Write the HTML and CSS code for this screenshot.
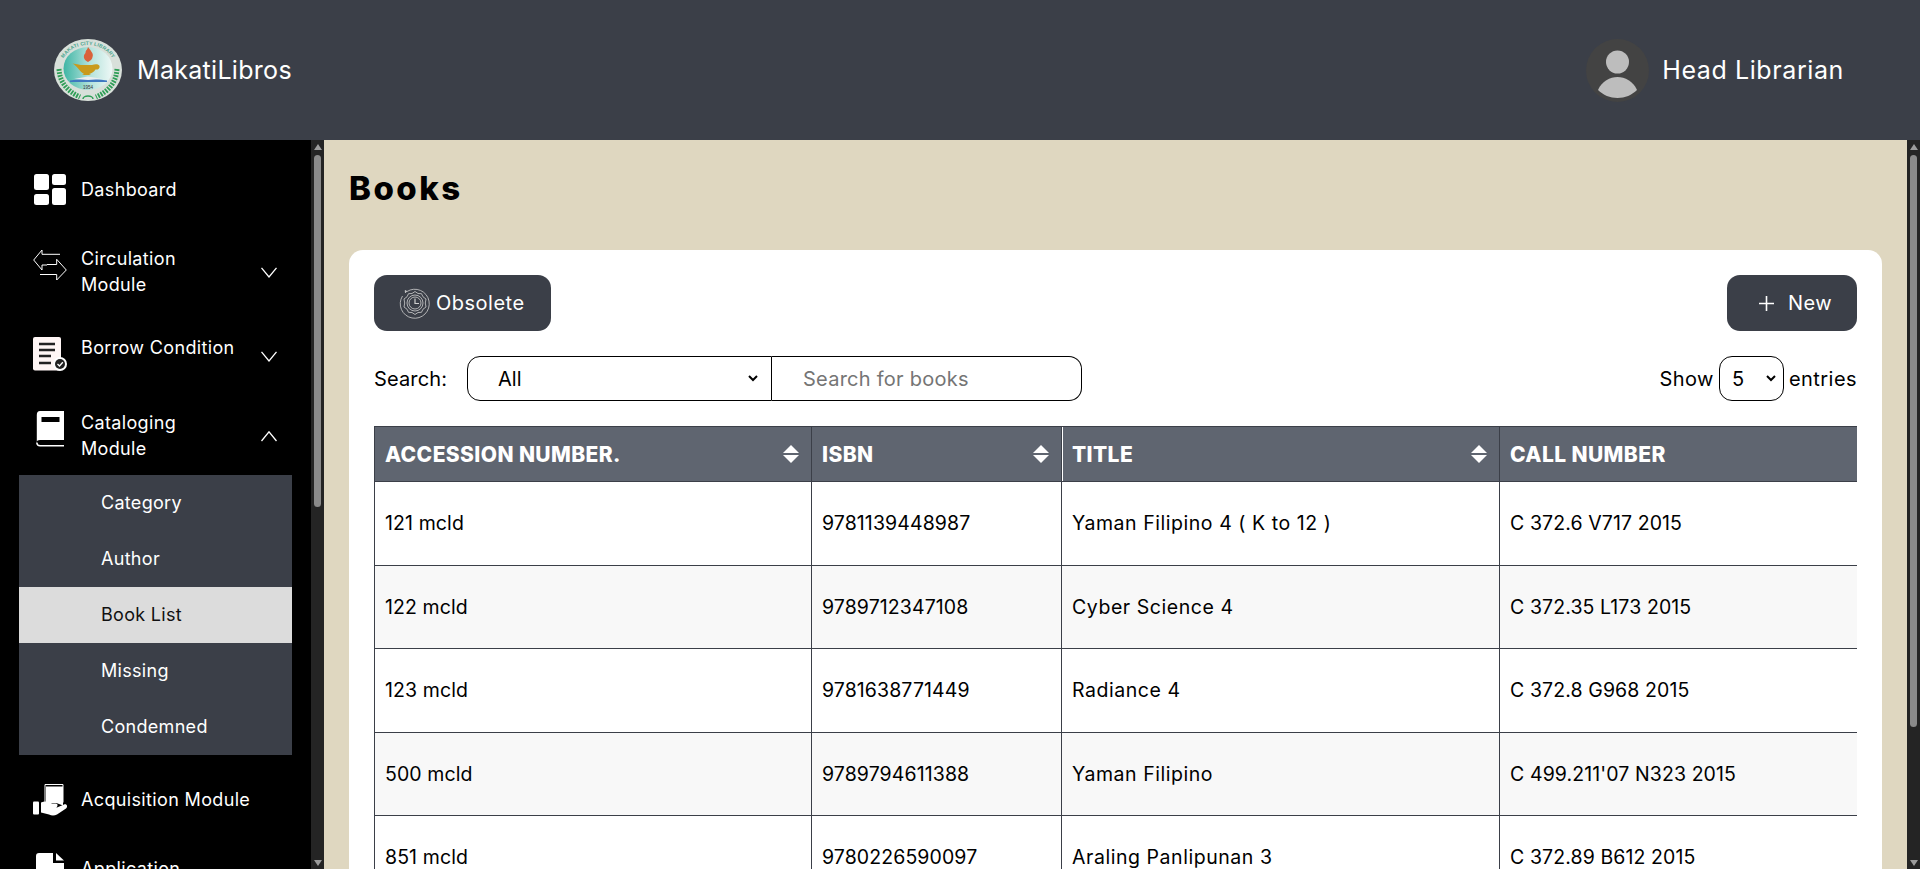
FILE: index.html
```html
<!DOCTYPE html>
<html lang="en">
<head>
<meta charset="utf-8">
<title>MakatiLibros - Books</title>
<link rel="stylesheet" href="styles.css">
</head>
<body>
<header class="topbar">
  <div class="brand">
    <svg class="logo" viewBox="0 0 68 62" aria-label="Makati City Library seal">
      <defs>
        <linearGradient id="seal" x1="0" x2="1" y1="0" y2="0">
          <stop offset="0" stop-color="#3fb5a5"/>
          <stop offset="0.55" stop-color="#b5e3dc"/>
          <stop offset="1" stop-color="#eef8f6"/>
        </linearGradient>
        <path id="sealArc" d="M5.500 33 A28.500 27 0 0 1 62.500 33"/>
      </defs>
      <ellipse cx="34" cy="31" rx="34" ry="31" fill="#d8e0da"/>
      <ellipse cx="34" cy="29.500" rx="24.500" ry="21.500" fill="url(#seal)"/>
      <text class="seal-text"><textPath href="#sealArc" startOffset="50%" text-anchor="middle">MAKATI CITY LIBRARY</textPath></text>
      <path d="M5 30 Q6 49 26 58 M63 30 Q62 49 42 58" fill="none" stroke="#2f9e57" stroke-width="5" stroke-dasharray="1.800 1.200"/>
      <path d="M29 60 a5 3 0 0 1 10 0" fill="none" stroke="#2f9e57" stroke-width="1.500"/>
      <path d="M34 23 C29 21 29 16 31.500 14 C31.500 11 33.500 11 34 8 C37 12 40 15 38.500 18 C38.500 20 36 22 34 23Z" fill="#d9623a"/>
      <path d="M18.500 24.500 C24 25 27 26.500 30 26 L38 26 C41 25 45 25 45.500 27 C46 30 43 31 41.500 30.500 C40 33 37 34.500 35 35 L37 36 L28 36 L30 35 C26 33 24 28 18.500 24.500Z" fill="#c99a1c"/>
      <path d="M16 41.500 L34 39 L53 41.500 L53 43 L16 43Z" fill="#3f78c0"/>
      <path d="M20 40 L34 37.500 L49 40 L34 41Z" fill="#e9eef0"/>
      <text class="seal-year" x="34" y="50" text-anchor="middle">1954</text>
    </svg>
    <span class="brand-name">MakatiLibros</span>
  </div>
  <div class="user">
    <svg class="avatar" viewBox="0 0 63 63">
      <circle cx="31.500" cy="31.500" r="31.500" fill="#434343"/>
      <circle cx="31.500" cy="23" r="11.500" fill="#bdbdbd"/>
      <path d="M12 51 C16 42 24 38 31.500 38 C39 38 47 42 51 51 C46 56 39 59 31.500 59 C24 59 17 56 12 51Z" fill="#bdbdbd"/>
    </svg>
    <span class="user-name">Head Librarian</span>
  </div>
</header>

<div class="shell">
  <aside class="side-pane">
    <nav class="nav">
      <a class="nav-item item-dashboard">
        <svg class="nav-icon" viewBox="0 0 34 32" fill="#fff">
          <rect x="1" y="0" width="15" height="16" rx="2.500"/>
          <rect x="19" y="0" width="14" height="11" rx="2.500"/>
          <rect x="1" y="20" width="15" height="11" rx="2.500"/>
          <rect x="19" y="14" width="14" height="17" rx="2.500"/>
        </svg>
        <span class="nav-label">Dashboard</span>
      </a>
      <a class="nav-item item-circulation">
        <svg class="nav-icon" viewBox="0 0 34 34" fill="none" stroke="#fff" stroke-width="1">
          <path d="M27 7.300 H9 V3 L0.700 13 L9 23 V18 H14"/>
          <path d="M14 17.500 H23.700 V12.300 L33.300 23 L23.700 33 V27.500 H7"/>
        </svg>
        <span class="nav-label">Circulation Module</span>
        <svg class="chev" viewBox="0 0 16 11" fill="none" stroke="#fff" stroke-width="1.300"><path d="M0.500 0.800 L8 10 L15.500 0.800"/></svg>
      </a>
      <a class="nav-item item-borrow">
        <svg class="nav-icon" viewBox="0 0 34 34">
          <rect x="0" y="0" width="28" height="33.500" rx="2" fill="#fff6f5"/>
          <path d="M6 7 H22 M6 13 H22 M6 19 H18 M6 26 H18" stroke="#222" stroke-width="2.300"/>
          <circle cx="27" cy="27" r="7" fill="#fff"/>
          <circle cx="27" cy="27" r="5" fill="#222"/>
          <path d="M24.500 27 L26.500 29 L29.800 25.300" fill="none" stroke="#fff" stroke-width="1.300"/>
        </svg>
        <span class="nav-label">Borrow Condition</span>
        <svg class="chev" viewBox="0 0 16 11" fill="none" stroke="#fff" stroke-width="1.300"><path d="M0.500 0.800 L8 10 L15.500 0.800"/></svg>
      </a>
      <a class="nav-item item-catalog">
        <svg class="nav-icon book-icon" viewBox="0 0 28 36">
          <path d="M4 0 H28 V29 H4 Q1 29 0.800 31 V4 Q0.800 0 4 0Z" fill="#fff"/>
          <rect x="5.500" y="6" width="18" height="5" fill="#000"/>
          <path d="M28 34.800 H4 Q1 34.800 0.800 31.500" fill="none" stroke="#fff" stroke-width="1.500"/>
        </svg>
        <span class="nav-label">Cataloging Module</span>
        <svg class="chev" viewBox="0 0 16 11" fill="none" stroke="#fff" stroke-width="1.300"><path d="M0.500 10 L8 0.800 L15.500 10"/></svg>
      </a>
      <ul class="submenu">
        <li class="sub-item">Category</li>
        <li class="sub-item">Author</li>
        <li class="sub-item sub-active">Book List</li>
        <li class="sub-item">Missing</li>
        <li class="sub-item">Condemned</li>
      </ul>
      <a class="nav-item item-acq">
        <svg class="nav-icon" viewBox="0 0 34 33" fill="#fff">
          <path d="M12 1 H30 V19 H12Z" fill="none" stroke="#fff" stroke-width="1"/>
          <path d="M13 3 H30 V22 L22 19 H13Z"/>
          <rect x="0" y="18" width="6" height="13" rx="1"/>
          <path d="M8 19 C12 17 16 18 19 20 H23 C25 20 25 23 23 24 H17 H24 L31 21 C34 20 35 23 33 25 L24 31 Q20 33 16 31 L8 29Z"/>
        </svg>
        <span class="nav-label">Acquisition Module</span>
      </a>
      <a class="nav-item item-app">
        <svg class="nav-icon" viewBox="0 0 34 34" fill="#fff">
          <path d="M6 1 H20 V11 H31 V34 H3 V4 Q3 1 6 1Z"/>
          <path d="M23 1 L31 8.500 H23Z"/>
        </svg>
        <span class="nav-label">Application</span>
      </a>
    </nav>
    <div class="rail">
      <i class="rail-up"></i>
      <div class="rail-track"><div class="thumb thumb-side"></div></div>
      <i class="rail-down"></i>
    </div>
  </aside>

  <div class="main-pane">
    <main class="content">
      <h1 class="page-title">Books</h1>
      <section class="card">
        <div class="toolbar">
          <button class="btn btn-obsolete" type="button">
            <svg class="obsolete-icon" viewBox="0 0 32 32" fill="none" stroke="#cfcfcf" stroke-width="0.800">
              <path d="M8 4.500 A14.500 14.500 0 1 1 3.500 9"/>
              <path d="M8 4.500 L6.200 3.500 L6.500 6" fill="#cfcfcf"/>
              <path d="M16 4.500 L19 6.500 L22.500 6.700 L24 9.800 L27 12 L26.300 16 L27 20 L24 22.200 L22.500 25.300 L19 25.500 L16 27.500 L13 25.500 L9.500 25.300 L8 22.200 L5 20 L5.700 16 L5 12 L8 9.800 L9.500 6.700 L13 6.500Z"/>
              <circle cx="16" cy="16" r="8"/>
              <circle cx="16" cy="16" r="6"/>
              <path d="M16 11.500 V16.500 H20" stroke-width="1.200"/>
            </svg>
            <span>Obsolete</span>
          </button>
          <button class="btn btn-new" type="button">
            <svg class="plus-icon" viewBox="0 0 15 15" stroke="#fff" stroke-width="1.600"><path d="M7.500 0 V15 M0 7.500 H15"/></svg>
            <span>New</span>
          </button>
        </div>
        <div class="filters">
          <div class="search">
            <label class="search-label" for="field">Search:</label>
            <select class="search-select" id="field"><option>All</option></select>
            <input class="search-input" type="text" placeholder="Search for books">
          </div>
          <div class="entries">
            <span>Show</span>
            <select class="entries-select"><option>5</option></select>
            <span>entries</span>
          </div>
        </div>
        <div class="table-wrap">
          <table class="books">
            <colgroup>
              <col class="col-wide"><col class="col-isbn"><col class="col-title"><col class="col-wide">
            </colgroup>
            <thead>
              <tr>
                <th><div class="th-in"><span>ACCESSION NUMBER.</span><i class="sort"></i></div></th>
                <th><div class="th-in"><span>ISBN</span><i class="sort"></i></div></th>
                <th class="th-title"><div class="th-in"><span>TITLE</span><i class="sort"></i></div></th>
                <th><div class="th-in"><span>CALL NUMBER</span><i class="sort"></i></div></th>
              </tr>
            </thead>
            <tbody>
              <tr><td>121 mcld</td><td>9781139448987</td><td class="td-title">Yaman Filipino 4 ( K to 12 )</td><td>C 372.6 V717 2015</td></tr>
              <tr><td>122 mcld</td><td>9789712347108</td><td class="td-title">Cyber Science 4</td><td>C 372.35 L173 2015</td></tr>
              <tr><td>123 mcld</td><td>9781638771449</td><td class="td-title">Radiance 4</td><td>C 372.8 G968 2015</td></tr>
              <tr><td>500 mcld</td><td>9789794611388</td><td class="td-title">Yaman Filipino</td><td>C 499.211'07 N323 2015</td></tr>
              <tr><td>851 mcld</td><td>9780226590097</td><td class="td-title">Araling Panlipunan 3</td><td>C 372.89 B612 2015</td></tr>
            </tbody>
          </table>
        </div>
      </section>
    </main>
    <div class="rail">
      <i class="rail-up"></i>
      <div class="rail-track"><div class="thumb thumb-main"></div></div>
      <i class="rail-down"></i>
    </div>
  </div>
</div>
</body>
</html>
```

FILE: styles.css
```css
* { box-sizing: border-box; }
html, body { height: 100%; }
body {
  margin: 0;
  display: flex;
  flex-direction: column;
  overflow: hidden;
  font-family: Inter, "Open Sans", sans-serif;
  color: #000;
  background: #000;
}

/* top bar */
.topbar {
  flex: 0 0 140px;
  display: flex;
  align-items: center;
  justify-content: space-between;
  padding: 0 76px 0 54px;
  background: #3b3f48;
  color: #fff;
}
.brand { display: flex; align-items: center; gap: 15px; }
.logo { width: 68px; height: 62px; }
.seal-text { font: 700 5px "Liberation Sans", sans-serif; fill: #4aa58f; letter-spacing: 0.150px; }
.seal-year { font: 400 4.500px "Liberation Sans", sans-serif; fill: #333; }
.brand-name { font-size: 25px; letter-spacing: 0.300px; }
.user { display: flex; align-items: center; gap: 13px; }
.avatar { width: 63px; height: 63px; }
.user-name { font-size: 25px; letter-spacing: 0.600px; }

/* shell and scroll rails */
.shell { flex: 1; min-height: 0; display: flex; }
.side-pane { flex: 0 0 324px; display: flex; min-height: 0; background: #000; color: #fff; }
.main-pane { flex: 1; min-width: 0; display: flex; min-height: 0; background: #dfd7c0; }
.rail {
  flex: 0 0 13px;
  display: flex;
  flex-direction: column;
  align-items: center;
  background: #242424;
}
.rail-up, .rail-down { flex: 0 0 15px; display: block; width: 8px; position: relative; }
.rail-up::before, .rail-down::before {
  content: "";
  position: absolute;
  left: 0;
  border-left: 4px solid transparent;
  border-right: 4px solid transparent;
}
.rail-up::before { top: 4px; border-bottom: 6px solid #9c9c9c; }
.rail-down::before { bottom: 3px; border-top: 6px solid #9c9c9c; }
.rail-track { flex: 1; min-height: 0; }
.thumb { width: 7px; background: #8a8a8a; border-radius: 4px; }
.thumb-side { height: 352px; }
.thumb-main { height: 572px; }

/* sidebar */
.nav { flex: 1; min-width: 0; overflow: hidden; }
.nav-item {
  display: flex;
  align-items: center;
  padding: 0 34px 0 33px;
  font-size: 18px;
  letter-spacing: 0.350px;
  line-height: 26px;
}
.nav-icon { flex: 0 0 34px; width: 34px; height: 34px; }
.nav-label { margin-left: 14px; flex: 1; }
.chev { flex: 0 0 16px; width: 16px; height: 11px; }
.item-dashboard { height: 100px; }
.item-dashboard .nav-icon { height: 32px; }
.item-circulation { height: 64px; }
.item-circulation .nav-icon { margin-bottom: 16px; }
.item-circulation .nav-label { max-width: 140px; }
.item-circulation .chev { margin-left: auto; }
.item-borrow { height: 93px; }
.item-borrow .nav-icon { margin-top: 7px; }
.item-borrow .nav-label { margin-bottom: 5px; }
.item-borrow .chev { margin-top: 11px; }
.item-catalog { height: 78px; }
.item-catalog .nav-icon { margin-bottom: 14px; }
.item-catalog .nav-label { max-width: 140px; }
.item-catalog .chev { margin-left: auto; }
.book-icon { flex: 0 0 28px; width: 28px; height: 36px; margin-left: 3px; margin-right: 3px; }
.submenu {
  list-style: none;
  margin: 0 19px;
  padding: 0;
  background: #3b3f48;
}
.sub-item {
  height: 56px;
  padding: 0 0 1px 82px;
  display: flex;
  align-items: center;
  font-size: 18px;
  letter-spacing: 0.300px;
}
.sub-active { background: #dcdcdc; color: #111; }
.item-acq { height: 90px; }
.item-app { height: 48px; }

/* main */
.content {
  flex: 1;
  min-width: 0;
  overflow: hidden;
  padding: 0 25px;
}
.page-title {
  margin: 0;
  height: 110px;
  padding-bottom: 15px;
  display: flex;
  align-items: center;
  font-size: 33px;
  font-weight: 800;
  letter-spacing: 2.500px;
}
.card {
  background: #fff;
  border-radius: 14px;
  padding: 25px;
}
.toolbar { display: flex; justify-content: space-between; }
.btn {
  height: 56px;
  display: flex;
  align-items: center;
  border: 0;
  border-radius: 13px;
  background: #3b3f48;
  color: #fff;
  font: 400 20px Inter, sans-serif;
  letter-spacing: 0.500px;
}
.btn-obsolete { width: 177px; padding-left: 25px; gap: 5px; }
.obsolete-icon { width: 32px; height: 32px; }
.btn-new { width: 130px; padding-left: 32px; gap: 14px; }
.plus-icon { width: 15px; height: 15px; }
.filters {
  display: flex;
  align-items: center;
  justify-content: space-between;
  margin: 25px 0;
  height: 45px;
  font-size: 20px;
  letter-spacing: 0.150px;
}
.search { display: flex; align-items: center; height: 100%; }
.search-label { width: 93px; }
.search-select {
  appearance: none;
  width: 305px;
  height: 45px;
  border: 1px solid #000;
  border-radius: 13px 0 0 13px;
  background: #fff url("data:image/svg+xml,%3Csvg xmlns='http://www.w3.org/2000/svg' width='10' height='7' fill='none' stroke='%23000' stroke-width='2'%3E%3Cpath d='M1 1l4 4 4-4'/%3E%3C/svg%3E") no-repeat right 13px center;
  padding-left: 30px;
  font: 400 20px Inter, sans-serif;
  color: #000;
}
.search-input {
  width: 310px;
  height: 45px;
  border: 1px solid #000;
  border-left: 0;
  border-radius: 0 13px 13px 0;
  padding-left: 31px;
  font: 400 20px Inter, sans-serif;
  letter-spacing: 0.250px;
}
.search-input::placeholder { color: #757575; opacity: 1; }
.entries { display: flex; align-items: center; gap: 5px; letter-spacing: 0.450px; }
.entries-select {
  appearance: none;
  width: 65px;
  height: 45px;
  border: 1px solid #000;
  border-radius: 13px;
  background: #fff url("data:image/svg+xml,%3Csvg xmlns='http://www.w3.org/2000/svg' width='10' height='7' fill='none' stroke='%23000' stroke-width='2'%3E%3Cpath d='M1 1l4 4 4-4'/%3E%3C/svg%3E") no-repeat right 7px center;
  padding-left: 12px;
  font: 400 20px Inter, sans-serif;
  color: #000;
}
.table-wrap { overflow: hidden; }
.books {
  width: 1562px;
  table-layout: fixed;
  border-collapse: collapse;
}
.col-wide { width: 437px; }
.col-isbn { width: 250px; }
.col-title { width: 438px; }
.books th {
  height: 55px;
  padding: 0 12px 0 10px;
  background: #5f6570;
  border: 1px solid #3b3f48;
  color: #fff;
  font-size: 21px;
  font-weight: 800;
  letter-spacing: 0.400px;
  text-align: left;
}
.th-title { box-shadow: inset 1px 0 0 #fff; }
.th-in { display: flex; align-items: center; justify-content: space-between; }
.sort { display: block; width: 16px; height: 18px; flex: none; position: relative; }
.sort::before, .sort::after {
  content: "";
  position: absolute;
  left: 0;
  border-left: 8px solid transparent;
  border-right: 8px solid transparent;
}
.sort::before { top: 0; border-bottom: 8px solid #fff; }
.sort::after { bottom: 0; border-top: 8px solid #fff; }
.books td {
  height: 83.500px;
  padding: 0 10px;
  border: 1px solid #3b3f48;
  font-size: 19.500px;
  letter-spacing: 0.100px;
  white-space: nowrap;
}
.books .td-title { letter-spacing: 0.550px; }
.books tbody tr:nth-child(even) td { background: #f8f8f8; }
```
